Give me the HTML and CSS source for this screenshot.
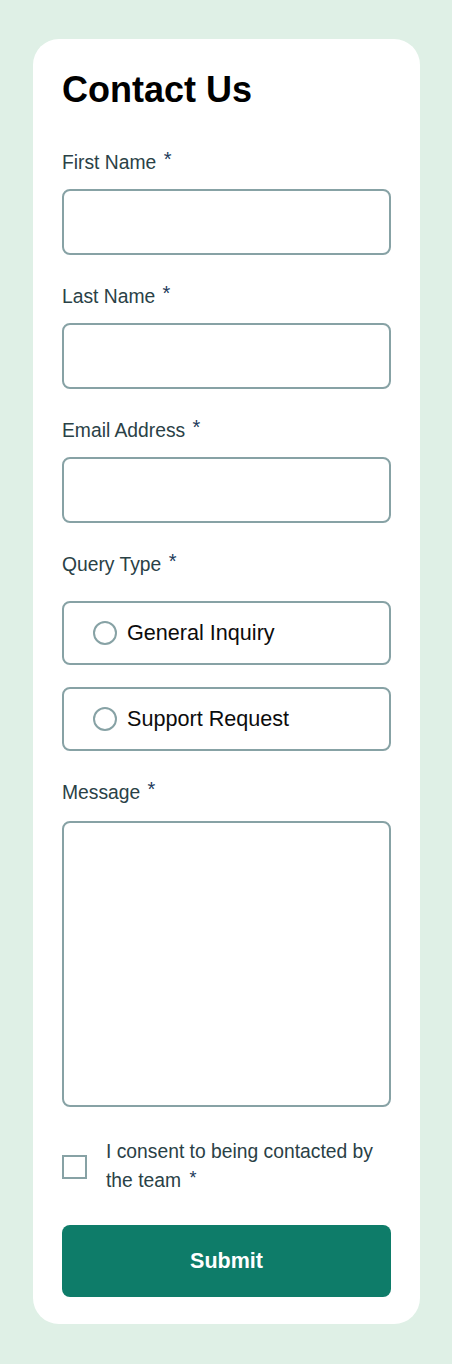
FILE: index.html
```html
<!DOCTYPE html>
<html lang="en">
<head>
<meta charset="utf-8">
<title>Contact Us</title>
<link rel="stylesheet" href="styles.css">
</head>
<body>
<main class="page">
  <form class="card">
    <h1 class="title">Contact Us</h1>

    <div class="field">
      <label class="label" for="first">First Name <span class="req">*</span></label>
      <input class="input" id="first" type="text">
    </div>

    <div class="field">
      <label class="label" for="last">Last Name <span class="req">*</span></label>
      <input class="input" id="last" type="text">
    </div>

    <div class="field">
      <label class="label" for="email">Email Address <span class="req">*</span></label>
      <input class="input" id="email" type="email">
    </div>

    <div class="field">
      <span class="label">Query Type <span class="req">*</span></span>
      <div class="radios">
        <label class="radio-box"><input class="radio" type="radio" name="q"><span class="radio-text">General Inquiry</span></label>
        <label class="radio-box"><input class="radio" type="radio" name="q"><span class="radio-text">Support Request</span></label>
      </div>
    </div>

    <div class="field">
      <label class="label" for="msg">Message <span class="req">*</span></label>
      <textarea class="textarea" id="msg"></textarea>
    </div>

    <label class="consent">
      <input class="check" type="checkbox">
      <span class="consent-text">I consent to being contacted by the team <span class="req">*</span></span>
    </label>

    <button class="submit" type="button">Submit</button>
  </form>
</main>
</body>
</html>
```

FILE: styles.css
```css
* { box-sizing: border-box; }

html, body {
  margin: 0;
  padding: 0;
  background: #dff0e6;
}

body {
  font-family: "Liberation Sans", Arial, sans-serif;
  color: #2a4146;
}

.page {
  padding: 39px 32px 39px 33px;
}

.card {
  background: #ffffff;
  border-radius: 26px;
  padding: 30px 29px 27px 29px;
  display: flex;
  flex-direction: column;
}

.title {
  margin: 0 0 41px 0;
  font-size: 36px;
  line-height: 41px;
  font-weight: 700;
  color: #000000;
}

.field {
  display: flex;
  flex-direction: column;
  margin-bottom: 30px;
}

.label {
  display: block;
  font-size: 19.3px;
  line-height: 24px;
  margin-bottom: 14px;
  color: #2a4146;
}

.req {
  color: #223a5a;
  font-size: 20px;
  line-height: 0;
  vertical-align: 3px;
  margin-left: 2px;
}

.input {
  display: block;
  width: 100%;
  height: 66px;
  border: 2px solid #87a2a5;
  border-radius: 8px;
  background: #fff;
  font: inherit;
  outline: none;
}

.radios {
  display: flex;
  flex-direction: column;
  gap: 22px;
  margin-top: 10px;
}

.radio-box {
  display: flex;
  align-items: center;
  height: 64px;
  border: 2px solid #87a2a5;
  border-radius: 8px;
  padding-left: 29px;
  gap: 10px;
}

.radio {
  appearance: none;
  -webkit-appearance: none;
  margin: 0;
  width: 24px;
  height: 24px;
  border: 2px solid #87a2a5;
  border-radius: 50%;
  background: #fff;
  flex: none;
}

.radio-text {
  font-size: 21.6px;
  color: #0c0c0c;
}

.textarea {
  display: block;
  width: 100%;
  height: 286px;
  border: 2px solid #87a2a5;
  border-radius: 8px;
  background: #fff;
  resize: none;
  font: inherit;
  outline: none;
  margin-top: 2px;
}

.consent {
  display: flex;
  align-items: center;
  gap: 19px;
  margin-bottom: 30px;
}

.check {
  appearance: none;
  -webkit-appearance: none;
  margin: 0;
  width: 25px;
  height: 24px;
  border: 2px solid #87a2a5;
  border-radius: 0;
  background: #fff;
  flex: none;
  transform: translateY(1px);
}

.consent-text {
  font-size: 19.3px;
  line-height: 29px;
  color: #2a4146;
}

.consent-text .req {
  font-size: 18px;
  margin-left: 3px;
}

.submit {
  display: block;
  width: 100%;
  height: 72px;
  border: none;
  border-radius: 8px;
  background: #0e7c69;
  color: #ffffff;
  font-family: "Liberation Sans", Arial, sans-serif;
  font-weight: 700;
  font-size: 21.5px;
}
```
